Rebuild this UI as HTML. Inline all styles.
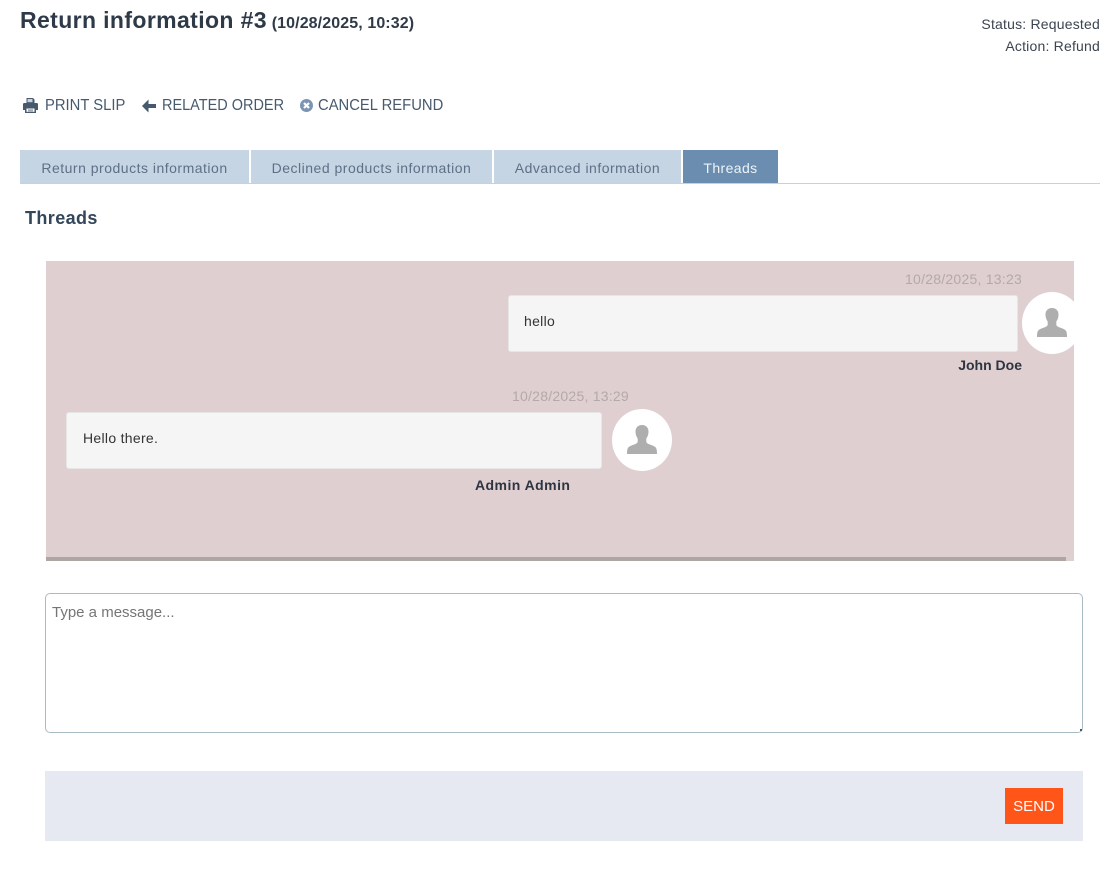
<!DOCTYPE html>
<html>
<head>
<meta charset="utf-8">
<style>
html,body{margin:0;padding:0;background:#fff;width:1120px;height:880px;overflow:hidden}
body{position:relative;font-family:"Liberation Sans",sans-serif;color:#333c48}
.a{position:absolute;white-space:nowrap}
.tab{position:absolute;top:150px;height:33px;background:#c5d5e4;color:#5d7086;font-size:14px;line-height:36px;text-align:center;letter-spacing:.5px}
.act{font-size:16px;color:#46596d;line-height:20px;top:96px;transform-origin:0 50%}
.ts{font-size:14px;color:#b3a9aa;line-height:18px;letter-spacing:.24px}
.bub{position:absolute;background:#f5f5f5;border:1px solid #e6e6e6;border-radius:3px;box-sizing:border-box;font-size:14px;color:#333;line-height:20px;letter-spacing:.3px;padding:15px 15px}
.name{font-size:14px;font-weight:bold;color:#2e3440;line-height:18px}
.av{position:absolute;width:60px;height:62px;border-radius:50%;background:#fff;overflow:hidden}
</style>
</head>
<body>
<div class="a" style="left:20px;top:5px;font-size:23px;font-weight:bold;line-height:30px;color:#2f3a48;letter-spacing:.38px">Return information #3 <span style="font-size:16px;letter-spacing:.1px;margin-left:-2px">(10/28/2025, 10:32)</span></div>
<div class="a" style="right:20px;top:13px;font-size:14px;line-height:22px;text-align:right;color:#3b4450;letter-spacing:.2px">Status: Requested<br>Action: Refund</div>

<svg class="a" style="left:23px;top:98px" width="15" height="15" viewBox="0 0 15 15"><path fill="#46596d" d="M3.500 0h6.500l1.500 1.500V5h-8zM1.200 5h12.600c.7 0 1.200.5 1.200 1.200V12h-2v3H2v-3H0V6.200C0 5.500.5 5 1.200 5z"/><path fill="#c9d3dd" d="M4.500 1h5v3.200h-5z"/><path fill="#fff" d="M3.500 10.500h8v3.300h-8z"/><path fill="#46596d" d="M5 11.600h5v.7H5zM5 12.800h5v.5H5z"/></svg>
<div class="a act" style="left:45px;transform:scaleX(.925)">PRINT SLIP</div>
<svg class="a" style="left:142px;top:99px" width="14" height="14" viewBox="0 0 14 14"><path fill="#46596d" d="M0 7l6.500-6.500v4.500H14v4H6.500v4.500z"/></svg>
<div class="a act" style="left:162px;transform:scaleX(.905)">RELATED ORDER</div>
<svg class="a" style="left:300px;top:99px" width="13" height="13" viewBox="0 0 13 13"><circle cx="6.500" cy="6.500" r="6.500" fill="#7b96b2"/><path stroke="#fff" stroke-width="2.200" d="M4 4l5 5M9 4l-5 5"/></svg>
<div class="a act" style="left:318px;transform:scaleX(.925)">CANCEL REFUND</div>

<div class="a" style="left:20px;top:183px;width:1080px;height:1px;background:#c9d0d6"></div>
<div class="tab" style="left:20px;width:229px">Return products information</div>
<div class="tab" style="left:251px;width:241px">Declined products information</div>
<div class="tab" style="left:494px;width:187px">Advanced information</div>
<div class="tab" style="left:683px;width:95px;background:#6a8db0;color:#eef3f8;letter-spacing:.4px">Threads</div>

<div class="a" style="left:25px;top:206px;font-size:18px;font-weight:bold;line-height:24px;color:#33465a;letter-spacing:.4px">Threads</div>

<div class="a" style="left:46px;top:261px;width:1028px;height:300px;background:#dfcfd1;overflow:hidden">
  <div class="a" style="left:0;top:296px;width:1020px;height:4px;background:#aea5a5"></div>
  <div class="a ts" style="right:52px;top:9px">10/28/2025, 13:23</div>
  <div class="bub" style="left:462px;top:34px;width:510px;height:57px">hello</div>
  <div class="av" style="left:976px;top:31px"><svg width="60" height="62" viewBox="0 0 60 62"><path fill="#aeaeae" d="M30 16c-4.200 0-6.500 2.800-6.500 6.500 0 3 .9 5.400 2.200 7v3c0 1.600-1.700 2.300-4.200 3.300-2.900 1.100-5.200 1.900-5.800 3.700-.4 1-.7 2.500-.7 5.500h30c0-3-.3-4.500-.7-5.500-.6-1.800-2.900-2.600-5.800-3.700-2.500-1-4.200-1.700-4.200-3.300v-3c1.300-1.600 2.200-4 2.200-7 0-3.700-2.300-6.500-6.500-6.500z"/></svg></div>
  <div class="a name" style="right:52px;top:95px">John Doe</div>

  <div class="a ts" style="left:466px;top:126px">10/28/2025, 13:29</div>
  <div class="bub" style="left:20px;top:151px;width:536px;height:57px;padding-left:16px">Hello there.</div>
  <div class="av" style="left:566px;top:148px"><svg width="60" height="62" viewBox="0 0 60 62"><path fill="#aeaeae" d="M30 16c-4.200 0-6.500 2.800-6.500 6.500 0 3 .9 5.400 2.200 7v3c0 1.600-1.700 2.300-4.200 3.300-2.900 1.100-5.200 1.900-5.800 3.700-.4 1-.7 2.500-.7 5.500h30c0-3-.3-4.500-.7-5.500-.6-1.800-2.900-2.600-5.800-3.700-2.500-1-4.200-1.700-4.200-3.300v-3c1.300-1.600 2.200-4 2.200-7 0-3.700-2.300-6.500-6.500-6.500z"/></svg></div>
  <div class="a name" style="left:429px;top:215px;letter-spacing:.45px">Admin Admin</div>
</div>

<div class="a" style="left:45px;top:593px;width:1038px;height:140px;box-sizing:border-box;border:1px solid #a9bcc6;border-radius:5px;background:#fff"></div>
<div class="a" style="left:52px;top:603px;font-size:15px;line-height:20px;color:#757575">Type a message...</div>
<div class="a" style="left:1080px;top:729px;width:2px;height:2px;background:#555"></div>

<div class="a" style="left:45px;top:771px;width:1038px;height:70px;background:#e6e9f1"></div>
<div class="a" style="left:1005px;top:788px;width:58px;height:36px;background:#ff5519;color:#fff;font-size:15px;line-height:37px;text-align:center">SEND</div>
</body>
</html>
